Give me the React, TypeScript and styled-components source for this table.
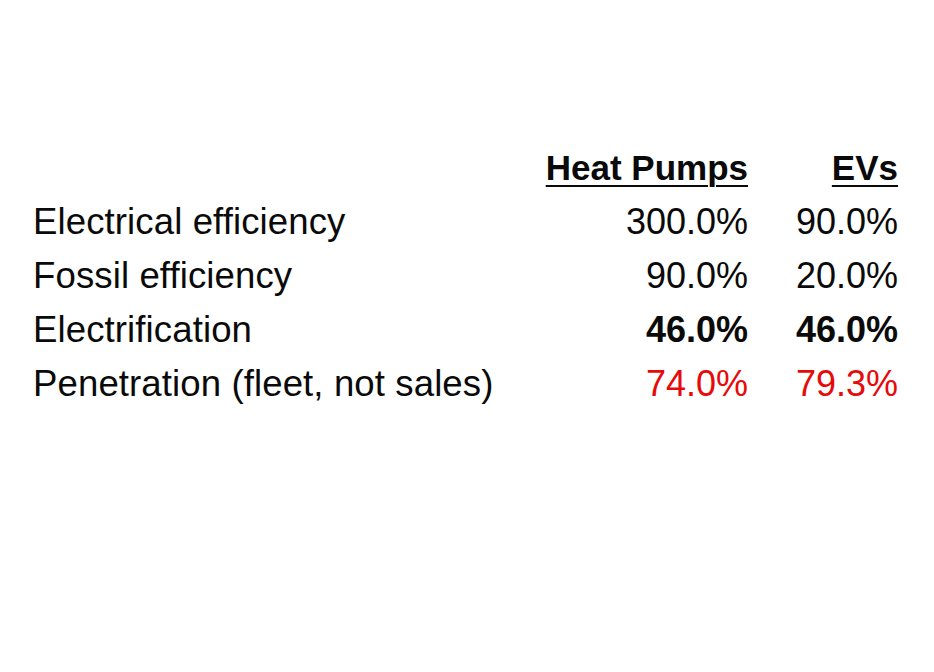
import React from 'react';
import styled, { createGlobalStyle } from 'styled-components';

const GlobalStyle = createGlobalStyle`
  html, body {
    margin: 0;
    padding: 0;
    background: #ffffff;
  }
`;

const Page = styled.div`
  width: 934px;
  height: 672px;
  background: #ffffff;
  padding: 141px 0 0 33px;
  box-sizing: border-box;
`;

const Table = styled.div`
  display: grid;
  grid-template-columns: 470px 245px 150px;
  grid-auto-rows: 54px;
  font-family: "Liberation Sans", Arial, sans-serif;
  font-size: 36px;
  line-height: 54px;
  color: #0a0a0a;
`;

const Label = styled.div`
  white-space: nowrap;
  font-size: 36.6px;
  letter-spacing: 0.1px;
`;

const Head = styled.div`
  text-align: right;
  font-weight: 700;
  text-decoration: underline;
  text-decoration-thickness: 2px;
  text-underline-offset: 5px;
  white-space: nowrap;
  font-size: 35px;
`;

const Value = styled.div<{ $bold?: boolean; $red?: boolean }>`
  text-align: right;
  white-space: nowrap;
  font-weight: ${(p) => (p.$bold ? 700 : 400)};
  color: ${(p) => (p.$red ? '#e60a0a' : '#0a0a0a')};
`;

type Row = {
  label: string;
  heat: string;
  ev: string;
  bold?: boolean;
  red?: boolean;
};

const rows: Row[] = [
  { label: 'Electrical efficiency', heat: '300.0%', ev: '90.0%' },
  { label: 'Fossil efficiency', heat: '90.0%', ev: '20.0%' },
  { label: 'Electrification', heat: '46.0%', ev: '46.0%', bold: true },
  { label: 'Penetration (fleet, not sales)', heat: '74.0%', ev: '79.3%', red: true },
];

const App = (): JSX.Element => {
  return (
    <>
      <GlobalStyle />
      <Page>
        <Table>
          <div />
          <Head>Heat Pumps</Head>
          <Head>EVs</Head>
          {rows.map((r) => (
            <React.Fragment key={r.label}>
              <Label>{r.label}</Label>
              <Value $bold={r.bold} $red={r.red}>{r.heat}</Value>
              <Value $bold={r.bold} $red={r.red}>{r.ev}</Value>
            </React.Fragment>
          ))}
        </Table>
      </Page>
    </>
  );
};

export default App;
